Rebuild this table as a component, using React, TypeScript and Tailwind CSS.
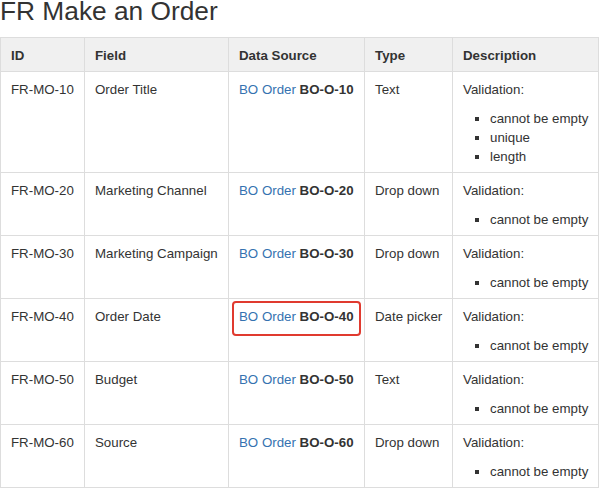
import React from "react";

type Row = {
  id: string;
  field: string;
  code: string;
  type: string;
  rules: string[];
  highlight?: boolean;
};

const rows: Row[] = [
  { id: "FR-MO-10", field: "Order Title", code: "BO-O-10", type: "Text", rules: ["cannot be empty", "unique", "length"] },
  { id: "FR-MO-20", field: "Marketing Channel", code: "BO-O-20", type: "Drop down", rules: ["cannot be empty"] },
  { id: "FR-MO-30", field: "Marketing Campaign", code: "BO-O-30", type: "Drop down", rules: ["cannot be empty"] },
  { id: "FR-MO-40", field: "Order Date", code: "BO-O-40", type: "Date picker", rules: ["cannot be empty"], highlight: true },
  { id: "FR-MO-50", field: "Budget", code: "BO-O-50", type: "Text", rules: ["cannot be empty"] },
  { id: "FR-MO-60", field: "Source", code: "BO-O-60", type: "Drop down", rules: ["cannot be empty"] },
];

const cell = "border-r border-b border-[#dddddd] px-[10px] pt-[8px] pb-[6px]";
const head = cell + " bg-[#f0f0f0] font-bold";

export default function App() {
  return (
    <div
      className="w-[599px] h-[489px] bg-white text-[#333333] overflow-hidden"
      style={{ fontFamily: '"Liberation Sans", Arial, sans-serif' }}
    >
      <h1 className="text-[26.3px] leading-[22px] font-normal mb-[15px] text-[#333333]">FR Make an Order</h1>
      <div className="grid grid-cols-[84px_144px_136px_88px_146px] border-l border-t border-[#dddddd] text-[13.3px] leading-[19px] w-[599px]">
        <div className={head}>ID</div>
        <div className={head}>Field</div>
        <div className={head}>Data Source</div>
        <div className={head}>Type</div>
        <div className={head}>Description</div>
        {rows.map((r) => (
          <React.Fragment key={r.id}>
            <div className={cell}>{r.id}</div>
            <div className={cell}>{r.field}</div>
            <div className={cell + " relative"}>
              <span className="whitespace-nowrap">
                <span className="text-[#3572b0]">BO Order</span> <strong className="font-bold">{r.code}</strong>
              </span>
              {r.highlight && (
                <div className="absolute left-[3px] top-[2px] w-[129px] h-[35px] border-2 border-[#e03a2f] rounded-[4px] pointer-events-none" />
              )}
            </div>
            <div className={cell + " whitespace-nowrap"}>{r.type}</div>
            <div className={cell}>
              <p>Validation:</p>
              <ul className="list-[square] list-outside pl-[27px] mt-[10px]">
                {r.rules.map((x) => (
                  <li key={x} className="whitespace-nowrap">{x}</li>
                ))}
              </ul>
            </div>
          </React.Fragment>
        ))}
      </div>
    </div>
  );
}
